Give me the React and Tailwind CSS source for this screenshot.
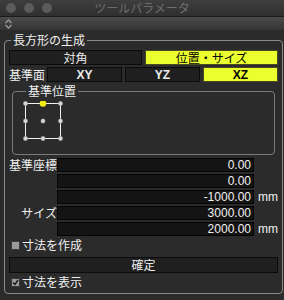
import React from 'react'

const JP = { fontFamily: '"Hiragino Kaku Gothic ProN", "Noto Sans CJK JP", sans-serif' }

const Btn = ({ children, on, className = '' }) => (
  <div
    className={`h-[15px] flex items-center justify-center text-[12px] leading-none border ${
      on ? 'bg-[#ecff2e] border-[#4a4a20] text-black' : 'bg-[#1f1f1f] border-[#0b0b0b] text-[#ececec]'
    } ${className}`}
  >
    {children}
  </div>
)

const Field = ({ value }) => (
  <div className="h-[14px] w-[197px] bg-[#141414] border border-[#050505] flex items-center justify-end pr-[2px] text-[12px] leading-none text-[#f0f0f0] font-['Liberation_Sans',sans-serif]">
    {value}
  </div>
)

const ROWS = [
  { label: '基準座標', value: '0.00' },
  { label: '', value: '0.00' },
  { label: '', value: '-1000.00', unit: 'mm' },
  { label: 'サイズ', value: '3000.00' },
  { label: '', value: '2000.00', unit: 'mm' },
]

function Anchor() {
  const pts = [0, 17.5, 35]
  return (
    <svg width="40" height="40" viewBox="-2.5 -2.5 40 40" className="block">
      <rect x="0" y="0" width="35" height="35" fill="none" stroke="#f2f2f2" strokeWidth="1" />
      {pts.map(y =>
        pts.map(x =>
          x === 17.5 && y === 0 ? null : (
            <circle key={`${x}-${y}`} cx={x} cy={y} r="2.2" fill="#d8d8d8" stroke="#888" strokeWidth="0.5" />
          )
        )
      )}
      <circle cx="17.5" cy="0" r="3.3" fill="#f2ec12" />
    </svg>
  )
}

export default function App() {
  return (
    <div className="w-[284px] h-[300px] bg-[#232323] overflow-hidden select-none" style={JP}>
      {/* title bar */}
      <div className="h-[16px] bg-gradient-to-b from-[#3e3e3e] to-[#2f2f2f] flex items-center relative">
        <div className="flex gap-[8px] pl-[6px]">
          <span className="block w-[10px] h-[10px] rounded-full bg-[#5b5b5b]" />
          <span className="block w-[10px] h-[10px] rounded-full bg-[#5b5b5b]" />
          <span className="block w-[10px] h-[10px] rounded-full bg-[#5b5b5b]" />
        </div>
        <div className="absolute inset-0 flex items-center justify-center text-[12px] text-[#6e6e6e] leading-none">
          ツールパラメータ
        </div>
      </div>
      {/* toolbar strip */}
      <div className="h-[14px] bg-gradient-to-b from-[#4a4a4a] to-[#353535] border-t border-[#1a1a1a] flex items-center pl-[4px]">
        <svg width="9" height="10" viewBox="0 0 9 10">
          <path d="M1.5 4 L4.5 1 L7.5 4" fill="none" stroke="#9a9a9a" strokeWidth="1.3" />
          <path d="M1.5 6 L4.5 9 L7.5 6" fill="none" stroke="#9a9a9a" strokeWidth="1.3" />
        </svg>
      </div>

      <div className="bg-[#2b2b2b] h-[270px] px-[4px] pt-[3px]">
        <fieldset className="border border-[#8a8a8a] rounded-[4px] h-[261px] px-[4px]">
          <legend className="ml-[2px] px-[2px] text-[12px] leading-[14px] text-[#f0f0f0]">長方形の生成</legend>

          <div className="grid grid-cols-2 gap-[3px] mt-[3px]">
            <Btn>対角</Btn>
            <Btn on>位置・サイズ</Btn>
          </div>

          <div className="flex items-center mt-[2px]">
            <span className="w-[38px] text-[12px] leading-none text-[#f0f0f0]">基準面</span>
            <div className="flex-1 grid grid-cols-3 gap-[3px]">
              <Btn className="font-bold font-['Liberation_Sans',sans-serif]">XY</Btn>
              <Btn className="font-bold font-['Liberation_Sans',sans-serif]">YZ</Btn>
              <Btn on className="font-bold font-['Liberation_Sans',sans-serif]">XZ</Btn>
            </div>
          </div>

          <fieldset className="border border-[#7a7a7a] rounded-[4px] mx-[3px] mt-[2px] h-[71px] pl-[10px] pt-[3px]">
            <legend className="ml-[3px] px-[2px] text-[12px] leading-[14px] text-[#f0f0f0]">基準位置</legend>
            <Anchor />
          </fieldset>

          <div className="flex flex-col gap-[2px] mt-[3px]">
            {ROWS.map((r, i) => (
              <div key={i} className="flex items-center">
                <span className="w-[48px] text-right text-[12px] leading-none text-[#f0f0f0]">{r.label}</span>
                <Field value={r.value} />
                {r.unit && (
                  <span className="ml-[4px] text-[12px] leading-none text-[#f0f0f0] font-['Liberation_Sans',sans-serif]">
                    {r.unit}
                  </span>
                )}
              </div>
            ))}
          </div>

          <div className="flex items-center h-[12px] mt-[3px] ml-[2px] gap-[2px]">
            <span className="block w-[9px] h-[9px] bg-[#9a9a9a] border border-[#3a3a3a]" />
            <span className="text-[12px] leading-none text-[#f0f0f0]">寸法を作成</span>
          </div>

          <Btn className="mt-[6px] !h-[16px]">確定</Btn>

          <div className="flex items-center h-[12px] mt-[3px] ml-[2px] gap-[2px]">
            <span className="w-[9px] h-[9px] bg-[#9a9a9a] border border-[#3a3a3a] flex items-center justify-center">
              <svg width="7" height="7" viewBox="0 0 7 7">
                <path d="M1 3.5 L3 5.5 L6 1" fill="none" stroke="#1a1a1a" strokeWidth="1.4" />
              </svg>
            </span>
            <span className="text-[12px] leading-none text-[#f0f0f0]">寸法を表示</span>
          </div>
        </fieldset>
      </div>
    </div>
  )
}
